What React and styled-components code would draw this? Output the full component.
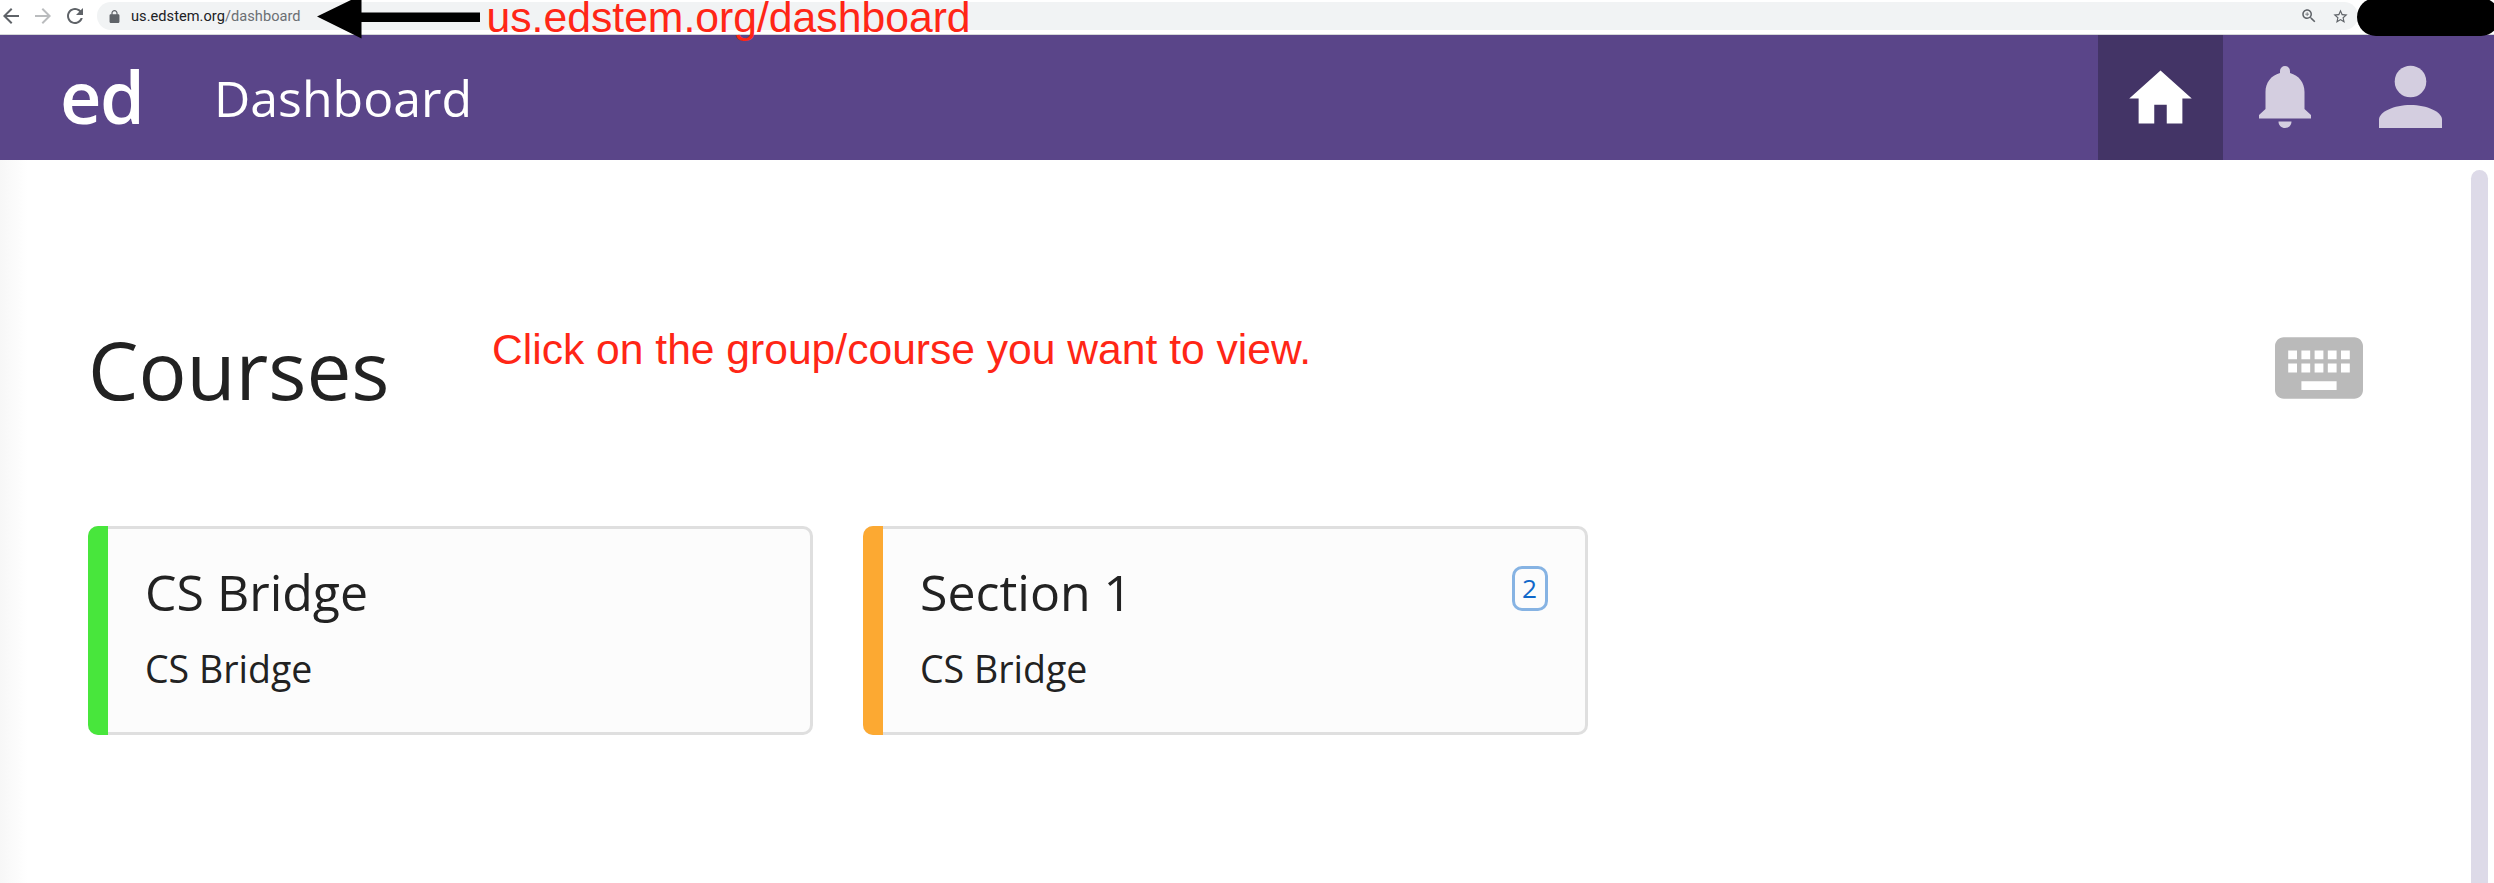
import React from "react";
import styled, { createGlobalStyle } from "styled-components";

const Global = createGlobalStyle`
  * { box-sizing: border-box; }
  body { margin: 0; background: #fff; overflow: hidden; }
`;

const Page = styled.div`
  position: relative;
  width: 2494px;
  height: 883px;
  overflow: hidden;
  display: flex;
  flex-direction: column;
  font-family: "Open Sans", sans-serif;
  color: #222;
`;

const BrowserBar = styled.div`
  height: 35px;
  flex: none;
  display: flex;
  align-items: flex-start;
  padding: 2px 136px 0 2px;
  background: #fff;
  border-bottom: 1px solid #d5d7d9;
`;

const BrowserButton = styled.svg`
  width: 18px;
  height: 18px;
  flex: none;
  margin: 5px 14px 0 0;
  fill: ${(p) => (p.$muted ? "#babcbe" : "#5f6368")};
`;

const AddressField = styled.div`
  flex: 1;
  height: 28px;
  margin-left: -1px;
  display: flex;
  align-items: center;
  padding: 0 9px 0 11px;
  border-radius: 14px;
  background: #f1f3f4;
`;

const FieldIcon = styled.svg`
  width: ${(p) => p.$size}px;
  height: ${(p) => p.$size}px;
  flex: none;
  margin-left: ${(p) => p.$gap || 0}px;
  fill: #5f6368;
`;

const Address = styled.span`
  flex: 1;
  margin-left: 10px;
  font: 14.6px/28px Roboto, sans-serif;
  letter-spacing: 0.04px;
  color: #202124;
  white-space: nowrap;
  span { color: #6b6f73; }
`;

const Header = styled.header`
  height: 125px;
  flex: none;
  display: flex;
  align-items: center;
  padding: 0 21px 0 60px;
  background: #5a4589;
  color: #fff;
`;

const Logo = styled.div`
  width: 154px;
  padding-bottom: 2px;
  font-size: 72px;
  font-weight: 600;
  line-height: 123px;
  letter-spacing: -1.5px;
`;

const HeaderTitle = styled.div`
  flex: 1;
  padding-top: 2px;
  font-size: 50px;
  line-height: 123px;
`;

const NavItem = styled.div`
  width: 125px;
  height: 125px;
  display: flex;
  align-items: center;
  justify-content: center;
  background: ${(p) => (p.$active ? "#433466" : "transparent")};
  svg { width: 75px; height: 75px; fill: ${(p) => (p.$active ? "#fff" : "#d4cee0")}; }
`;

const HomeIcon = styled.svg`
  margin-top: 1px;
`;

const Main = styled.main`
  flex: 1;
  display: flex;
  background: linear-gradient(to right, #f7f7f7, #fff 28px);
`;

const Content = styled.div`
  flex: 1;
  padding: 154px 108px 0 88px;
`;

const TitleRow = styled.div`
  height: 110px;
  display: flex;
  align-items: center;
  justify-content: space-between;
`;

const Title = styled.h1`
  margin: 0;
  font-size: 80px;
  font-weight: 400;
  line-height: 110px;
`;

const KeyboardIcon = styled.svg`
  width: 88px;
  height: 62px;
  margin-bottom: 3px;
  fill: #bababa;
`;

const Cards = styled.div`
  display: flex;
  gap: 50px;
  margin-top: 102px;
`;

const Card = styled.article`
  width: 725px;
  height: 209px;
  display: flex;
  border: 3px solid #dfdfdf;
  border-left: 0;
  border-radius: 10px;
  background: #fcfcfc;
`;

const Stripe = styled.div`
  width: 20px;
  margin: -3px 0;
  border-radius: 10px 0 0 10px;
  background: ${(p) => p.$color};
`;

const CardText = styled.div`
  flex: 1;
  padding: 29px 0 0 37px;
`;

const CardName = styled.div`
  font-size: 50px;
  line-height: 68px;
`;

const CardGroup = styled.div`
  margin-top: 17px;
  font-size: 37.5px;
  line-height: 52px;
`;

const Count = styled.div`
  width: 36px;
  height: 45px;
  margin: 37px 37px 0 0;
  padding-right: 1px;
  border: 3px solid #86b3e3;
  border-radius: 10px;
  color: #1068ca;
  font-size: 26.25px;
  line-height: 38px;
  text-align: center;
`;

const Scrollbar = styled.div`
  width: 17px;
  margin: 10px 6px -20px 0;
  border-radius: 9px;
  background: #dddae8;
`;

const Note = styled.div`
  position: absolute;
  left: ${(p) => p.$x}px;
  top: ${(p) => p.$y}px;
  font: ${(p) => p.$size}px/32px "Liberation Sans", Arial, sans-serif;
  color: #ff2616;
  white-space: nowrap;
`;

const Arrow = styled.svg`
  position: absolute;
  left: 317px;
  top: 0;
  width: 164px;
  height: 39px;
`;

const Redaction = styled.div`
  position: absolute;
  left: 2357px;
  top: -2px;
  width: 143px;
  height: 38px;
  border-radius: 19px;
  background: #000;
`;

const courses = [
  { name: "CS Bridge", group: "CS Bridge", color: "#48e63c" },
  { name: "Section 1", group: "CS Bridge", color: "#fca932", count: 2 },
];

export default function App() {
  return (
    <Page>
      <Global />
      <BrowserBar>
        <BrowserButton viewBox="3 3 18 18"><path d="M20 11H7.83l5.59-5.59L12 4l-8 8 8 8 1.41-1.41L7.83 13H20v-2z" /></BrowserButton>
        <BrowserButton viewBox="3 3 18 18" $muted><path d="M12 4l-1.41 1.41L16.17 11H4v2h12.17l-5.58 5.59L12 20l8-8z" /></BrowserButton>
        <BrowserButton viewBox="3 3 18 18"><path d="M17.65 6.35C16.2 4.9 14.21 4 12 4c-4.42 0-7.99 3.58-7.99 8s3.57 8 7.99 8c3.73 0 6.84-2.55 7.73-6h-2.08c-.82 2.33-3.04 4-5.65 4-3.31 0-6-2.69-6-6s2.69-6 6-6c1.66 0 3.14.69 4.22 1.78L13 11h7V4l-2.35 2.35z" /></BrowserButton>
        <AddressField>
          <FieldIcon $size={13} viewBox="2 1 20 21"><path d="M18 8h-1V6c0-2.76-2.24-5-5-5S7 3.24 7 6v2H6c-1.1 0-2 .9-2 2v10c0 1.1.9 2 2 2h12c1.1 0 2-.9 2-2V10c0-1.1-.9-2-2-2zM8.9 6c0-1.71 1.39-3.1 3.1-3.1s3.1 1.39 3.1 3.1v2H8.9V6z" /></FieldIcon>
          <Address>us.edstem.org<span>/dashboard</span></Address>
          <FieldIcon $size={18} viewBox="0 0 24 24"><path d="M15.5 14h-.79l-.28-.27C15.41 12.59 16 11.11 16 9.5 16 5.91 13.09 3 9.5 3S3 5.91 3 9.5 5.91 16 9.5 16c1.61 0 3.09-.59 4.23-1.57l.27.28v.79l5 4.99L20.49 19l-4.99-5zm-6 0C7.01 14 5 11.99 5 9.5S7.01 5 9.5 5 14 7.01 14 9.5 11.99 14 9.5 14zM12 10h-2v2H9v-2H7V9h2V7h1v2h2v1z" /></FieldIcon>
          <FieldIcon $size={17} $gap={14} viewBox="0 0 24 24"><path d="M22 9.24l-7.19-.62L12 2 9.19 8.63 2 9.24l5.46 4.73L5.82 21 12 17.27 18.18 21l-1.63-7.03L22 9.24zM12 15.4l-3.76 2.27 1-4.28-3.32-2.88 4.38-.38L12 6.1l1.71 4.04 4.38.38-3.32 2.88 1 4.28L12 15.4z" /></FieldIcon>
        </AddressField>
      </BrowserBar>

      <Header>
        <Logo>ed</Logo>
        <HeaderTitle>Dashboard</HeaderTitle>
        <NavItem $active>
          <HomeIcon viewBox="0 0 24 24"><path d="M10 20v-6h4v6h5v-8h3L12 3 2 12h3v8z" /></HomeIcon>
        </NavItem>
        <NavItem>
          <svg viewBox="0.5 0 75 75"><path d="M32.500 13V11a5 5 0 0 1 10 0v2c9 2.500 14.500 9.500 14.500 19v17l6.500 6v3.500h-52V55l6.500-6V32c0-9.500 5.500-16.500 14.500-19zM31 61.500h13c0 4-3 6.500-6.500 6.500S31 65.500 31 61.500z" /></svg>
        </NavItem>
        <NavItem>
          <svg viewBox="0 0 75 75"><circle cx="37.5" cy="21.5" r="15.8" /><path d="M6 68V59.500C6 52 21 45 37.500 45S69 52 69 59.500V68z" /></svg>
        </NavItem>
      </Header>

      <Main>
        <Content>
          <TitleRow>
            <Title>Courses</Title>
            <KeyboardIcon viewBox="2 5 20 14"><path d="M20 5H4c-1.1 0-2 .9-2 2v10c0 1.1.9 2 2 2h16c1.1 0 2-.9 2-2V7c0-1.1-.9-2-2-2zm-9 3h2v2h-2V8zm0 3h2v2h-2v-2zM8 8h2v2H8V8zm0 3h2v2H8v-2zm-1 2H5v-2h2v2zm0-3H5V8h2v2zm9 7H8v-2h8v2zm0-4h-2v-2h2v2zm0-3h-2V8h2v2zm3 3h-2v-2h2v2zm0-3h-2V8h2v2z" /></KeyboardIcon>
          </TitleRow>
          <Cards>
            {courses.map((c) => (
              <Card key={c.name}>
                <Stripe $color={c.color} />
                <CardText>
                  <CardName>{c.name}</CardName>
                  <CardGroup>{c.group}</CardGroup>
                </CardText>
                {c.count && <Count>{c.count}</Count>}
              </Card>
            ))}
          </Cards>
        </Content>
        <Scrollbar />
      </Main>

      <Arrow viewBox="0 0 164 39"><path d="M0 16.500L36-1H44.500V12.500H163V22H44.500V38.500z" /></Arrow>
      <Note $x={486.5} $y={1} $size={42.7}>us.edstem.org/dashboard</Note>
      <Note $x={492} $y={333} $size={42.6}>Click on the group/course you want to view.</Note>
      <Redaction />
    </Page>
  );
}
